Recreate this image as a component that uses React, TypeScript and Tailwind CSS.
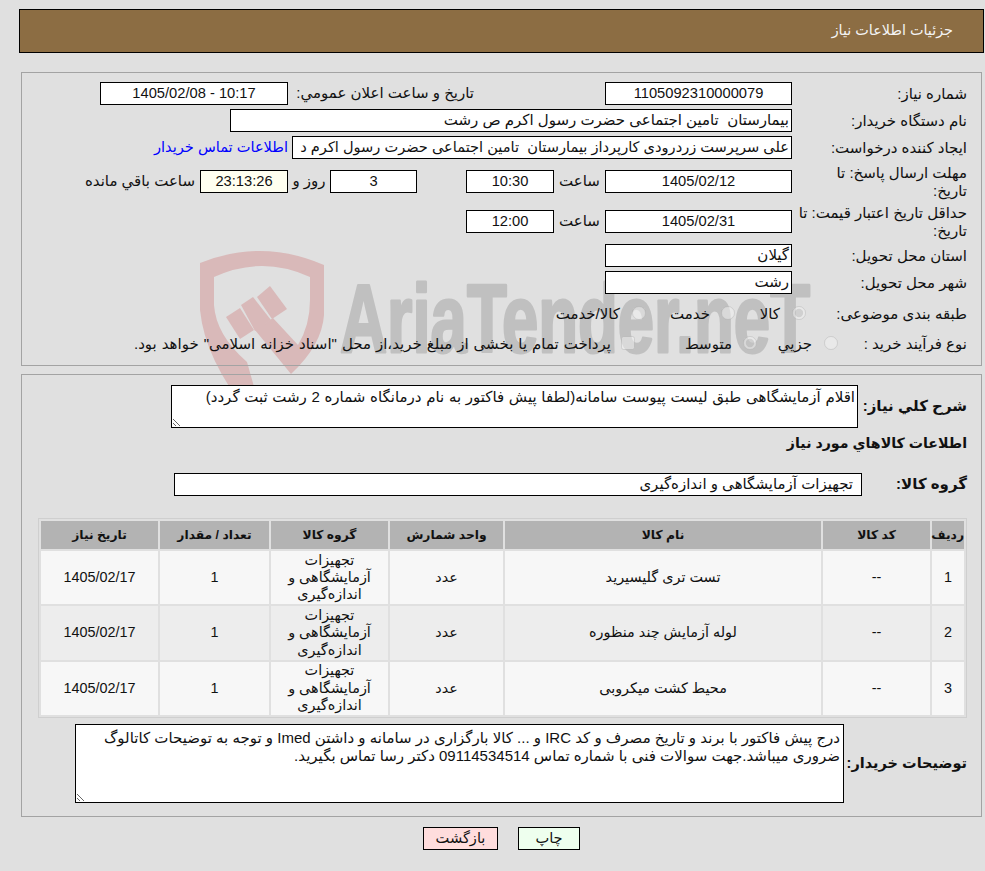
import type { ReactNode } from "react"

const items = [
  { id: 1, name: "تست تری گلیسیرید", bg: "bg-[#f7f7f7]" },
  { id: 2, name: "لوله آزمایش چند منظوره", bg: "bg-[#ededed]" },
  { id: 3, name: "محیط کشت میکروبی", bg: "bg-[#f7f7f7]" },
]

function Box({ className, children }: { className: string; children?: ReactNode }) {
  return (
    <div className={"flex h-[23px] shrink-0 items-center overflow-hidden whitespace-nowrap border border-black bg-white " + className}>
      {children}
    </div>
  )
}

function Label({ children }: { children: ReactNode }) {
  return <div className="w-[175px] shrink-0 whitespace-nowrap leading-[18px]">{children}</div>
}

function Watermark() {
  return (
    <svg dir="ltr" className="absolute left-0 top-0" width="985" height="871" aria-hidden="true">
      <path
        fill="#d9b9b9"
        d="M200 263 Q262 238 324 265 L324 315 Q322 345 291 374 L255 330 L273 318 L298 345 Q310 325 310 300 L310 277 Q262 255 214 277 L214 305 Q216 335 247 362 L262 415 L250 415 Q205 360 200 310 Z"
      />
      <path fill="#d9b9b9" d="M270 286 L287 309 L272 319 L257 297 Z" />
      <path fill="#d9b9b9" d="M253 297 L271 320 L255 331 L241 305 Z" />
      <path fill="#d9b9b9" d="M240 308 L254 330 L240 339 L226 317 Z" />
      <text
        x="340"
        y="352"
        direction="ltr"
        fontFamily="Liberation Sans"
        fontWeight="700"
        fontSize="97"
        fill="#c0c0c0"
        stroke="#c0c0c0"
        strokeWidth="3"
        strokeLinejoin="round"
        textLength="470"
        lengthAdjust="spacingAndGlyphs"
      >
        AriaTender.neT
      </text>
    </svg>
  )
}

export default function App() {
  return (
    <div
      dir="rtl"
      className="relative h-[871px] overflow-hidden bg-[#e0e0e0] pt-[9px] font-['Liberation_Sans','DejaVu_Sans',sans-serif] text-[15px] text-[#111]"
    >
      <Watermark />
      <div className="relative">
        <div className="ml-[19px] mr-px flex h-[44px] items-center border border-black bg-[#8c6d43] pr-[30px] text-[14.4px] text-[#f4f4f4]">
          جزئیات اطلاعات نیاز
        </div>

        {/* Main details */}
        <div className="ml-[21px] mr-[3px] mt-[19px] h-[294px] border border-[#a3a3a3] pr-[14px] pt-[9px]">
          <div className="flex items-center">
            <Label>شماره نیاز:</Label>
            <Box className="w-[187px] justify-center text-[14.7px]">1105092310000079</Box>
            <div className="mr-[131px] w-[181px] whitespace-nowrap">تاریخ و ساعت اعلان عمومي:</div>
            <Box className="mr-[5px] w-[188px] justify-center text-[14.7px]">10:17 - 1405/02/08</Box>
          </div>
          <div className="mt-[4px] flex items-center">
            <Label>نام دستگاه خریدار:</Label>
            <Box className="w-[562px] pr-[2px]">بیمارستان&nbsp; تامین اجتماعی حضرت رسول اکرم ص رشت</Box>
          </div>
          <div className="mt-[4px] flex items-center">
            <Label>ایجاد کننده درخواست:</Label>
            <Box className="w-[500px] pr-[2px] text-[14.6px]">علی سرپرست زردرودی کارپرداز بیمارستان&nbsp; تامین اجتماعی حضرت رسول اکرم د</Box>
            <a className="mr-[4px] whitespace-nowrap text-[14.6px] text-[#0000ff]">اطلاعات تماس خریدار</a>
          </div>
          <div className="mt-[4px] flex h-[37px] items-center">
            <Label>مهلت ارسال پاسخ: تا<br />تاریخ:</Label>
            <Box className="w-[187px] justify-center text-[14.7px]">1405/02/12</Box>
            <div className="w-[51px] text-center">ساعت</div>
            <Box className="w-[88px] justify-center text-[14.7px]">10:30</Box>
            <Box className="mr-[49px] w-[87px] justify-center text-[14.7px]">3</Box>
            <div className="w-[42px] text-center">روز و</div>
            <Box className="w-[88px] justify-center !bg-[#fffff0] text-[14.7px]">23:13:26</Box>
            <div className="mr-[5px] whitespace-nowrap">ساعت باقي مانده</div>
          </div>
          <div className="mt-[3px] flex h-[37px] items-center">
            <Label>حداقل تاریخ اعتبار قیمت: تا<br />تاریخ:</Label>
            <Box className="w-[187px] justify-center text-[14.7px]">1405/02/31</Box>
            <div className="w-[51px] text-center">ساعت</div>
            <Box className="w-[88px] justify-center text-[14.7px]">12:00</Box>
          </div>
          <div className="mt-[4px] flex items-center">
            <Label>استان محل تحویل:</Label>
            <Box className="w-[187px] pr-[2px]">گیلان</Box>
          </div>
          <div className="mt-[4px] flex items-center">
            <Label>شهر محل تحویل:</Label>
            <Box className="w-[187px] pr-[2px]">رشت</Box>
          </div>
          <div className="mt-[8px] flex h-[24px] items-center">
            <div className="w-[161px] shrink-0 whitespace-nowrap">طبقه بندی موضوعی:</div>
            <input type="radio" name="cat" defaultChecked disabled className="m-0 mb-[2px] size-[14px] opacity-70" />
            <span className="mr-[12px] w-[45px]">کالا</span>
            <input type="radio" name="cat" disabled className="m-0 mb-[2px] size-[14px] opacity-70" />
            <span className="mr-[11px] w-[64px]">خدمت</span>
            <input type="radio" name="cat" disabled className="m-0 mb-[2px] size-[14px] opacity-70" />
            <span className="mr-[12px] whitespace-nowrap">کالا/خدمت</span>
          </div>
          <div className="mt-[6px] flex h-[24px] items-center">
            <div className="w-[129px] shrink-0 whitespace-nowrap">نوع فرآیند خرید :</div>
            <input type="radio" name="kind" disabled className="m-0 mb-[2px] size-[14px] opacity-70" />
            <span className="mr-[12px] w-[55px]">جزیي</span>
            <input type="radio" name="kind" defaultChecked disabled className="m-0 mb-[2px] size-[14px] opacity-70" />
            <span className="mr-[11px] w-[97px]">متوسط</span>
            <input type="checkbox" disabled className="m-0 mb-[2px] size-[14px] opacity-70" />
            <span className="mr-[10px] whitespace-nowrap [word-spacing:0.8px]">
              پرداخت تمام یا بخشی از مبلغ خرید،از محل "اسناد خزانه اسلامی" خواهد بود.
            </span>
          </div>
        </div>

        {/* Items */}
        <div className="ml-[21px] mr-[3px] mt-[8px] h-[443px] border border-[#a3a3a3] pr-[14px] pt-[10px]">
          <div className="flex h-[43px] items-center">
            <div className="w-[109px] shrink-0 whitespace-nowrap text-[15px] font-bold">شرح کلي نیاز:</div>
            <textarea
              readOnly
              defaultValue="اقلام آزمایشگاهی طبق لیست پیوست سامانه(لطفا پیش فاکتور به نام درمانگاه شماره 2 رشت ثبت گردد)"
              className="h-[43px] w-[687px] border border-black bg-white pr-[2px] pt-[2px] leading-[18px] outline-none [word-spacing:0.5px]"
            />
          </div>
          <div className="mt-[5px] h-[20px] text-[14.2px] font-bold">اطلاعات کالاهاي مورد نیاز</div>
          <div className="mt-[20px] flex items-center">
            <div className="w-[105px] shrink-0 whitespace-nowrap text-[15px] font-bold">گروه کالا:</div>
            <Box className="w-[688px] pr-[8px]">تجهیزات آزمایشگاهی و اندازه‌گیری</Box>
          </div>
          <table className="mt-[22px] w-[927px] table-fixed border-separate border-spacing-[2px] border border-[#cfcfcf] text-center text-[14.4px]">
            <colgroup>
              <col className="w-[32px]" />
              <col className="w-[107px]" />
              <col className="w-[316px]" />
              <col className="w-[113px]" />
              <col className="w-[117px]" />
              <col className="w-[109px]" />
              <col className="w-[117px]" />
            </colgroup>
            <thead>
              <tr className="h-[28px] bg-[#b3b3b3] text-[12.3px] font-bold">
                <th>ردیف</th>
                <th>کد کالا</th>
                <th>نام کالا</th>
                <th>واحد شمارش</th>
                <th>گروه کالا</th>
                <th>تعداد / مقدار</th>
                <th>تاریخ نیاز</th>
              </tr>
            </thead>
            <tbody>
              {items.map((item) => (
                <tr key={item.id} className={"h-[53.4px] " + item.bg}>
                  <td>{item.id}</td>
                  <td>--</td>
                  <td>{item.name}</td>
                  <td>عدد</td>
                  <td className="leading-[17.4px]">
                    تجهیزات<br />آزمایشگاهی و<br />اندازه‌گیری
                  </td>
                  <td>1</td>
                  <td>1405/02/17</td>
                </tr>
              ))}
            </tbody>
          </table>
          <div className="mt-[6px] flex items-center">
            <div className="w-[123px] shrink-0 whitespace-nowrap text-[14.5px] font-bold">توضیحات خریدار:</div>
            <textarea
              readOnly
              defaultValue="درج پیش فاکتور با برند و تاریخ مصرف و کد IRC و ... کالا بارگزاری در سامانه و داشتن Imed و توجه به توضیحات کاتالوگ ضروری میباشد.جهت سوالات فنی با شماره تماس 09114534514 دکتر رسا تماس بگیرید."
              className="h-[79px] w-[769px] border border-black bg-white pr-[3px] pl-[3px] pt-[4px] leading-[18px] outline-none"
            />
          </div>
        </div>

        <div className="mt-[10px] flex gap-[20px] pr-[405px] text-[14.6px]">
          <button className="h-[23px] w-[62px] border border-black bg-[#eeffee]">چاپ</button>
          <button className="h-[23px] w-[75px] border border-black bg-[#ffdddd]">بازگشت</button>
        </div>
      </div>
    </div>
  )
}
